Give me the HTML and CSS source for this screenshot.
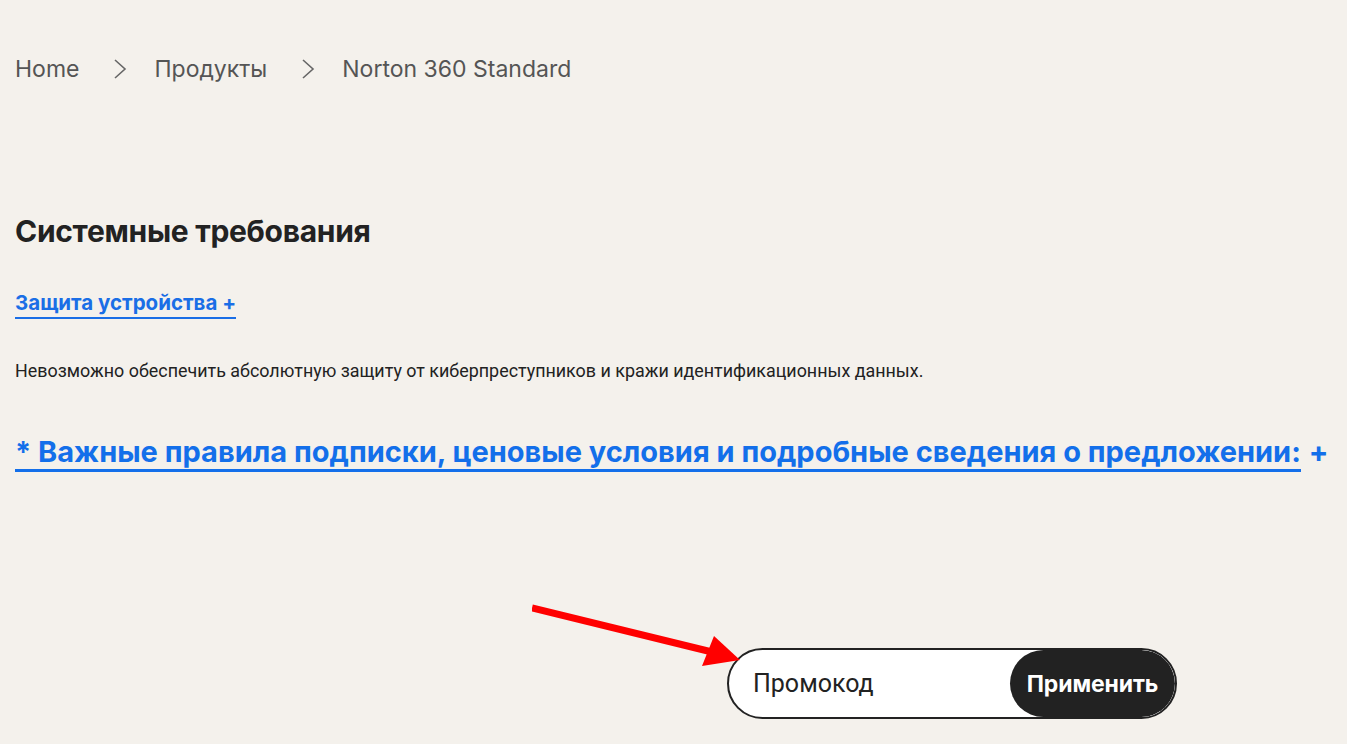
FILE: index.html
```html
<!DOCTYPE html>
<html lang="ru">
<head>
<meta charset="utf-8">
<link rel="stylesheet" href="styles.css">
</head>
<body>
<div class="page">
  <nav class="crumbs">
    <a class="crumb" href="#">Home</a>
    <svg class="chev" width="16" height="24" viewBox="0 0 16 24"><path d="M3 3 L13 12 L3 21" fill="none" stroke="#666" stroke-width="1.6"/></svg>
    <a class="crumb" href="#">Продукты</a>
    <svg class="chev" width="16" height="24" viewBox="0 0 16 24"><path d="M3 3 L13 12 L3 21" fill="none" stroke="#666" stroke-width="1.6"/></svg>
    <span class="crumb">Norton 360 Standard</span>
  </nav>

  <h2 class="title">Системные требования</h2>
  <a class="toggle" href="#">Защита устройства +</a>
  <p class="note">Невозможно обеспечить абсолютную защиту от киберпреступников и кражи идентификационных данных.</p>
  <div class="terms"><a class="terms-link" href="#">* Важные правила подписки, ценовые условия и подробные сведения о предложении:</a><span class="plus">+</span></div>

  <div class="promo-row">
    <form class="promo">
      <span class="promo-input">Промокод</span>
      <button class="promo-btn" type="button">Применить</button>
    </form>
  </div>
  <svg class="arrow" width="220" height="70" viewBox="0 0 220 70"><path d="M0 4 L180 48" stroke="#f00" stroke-width="7" fill="none"/><polygon points="208,56 170,62 182,32" fill="#f00"/></svg>
</div>
</body>
</html>
```
FILE: styles.css
```css
html, body { margin: 0; padding: 0; }
body { background: #f4f1ec; font-family: Inter, "Noto Sans", sans-serif; color: #222; }
.page { position: relative; padding: 0 15px; height: 744px; overflow: hidden; }
.crumbs { display: flex; align-items: center; padding-top: 54px; height: 30px; }
.crumb { font-size: 23px; color: #555; text-decoration: none; line-height: 30px; }
.chev { margin: 0 26px 0 33px; }
.title { font-size: 30px; font-weight: 700; margin: 130px 0 0; line-height: 34px; color: #222; letter-spacing: -0.3px; }
.toggle { display: inline-block; margin-top: 42px; font-size: 20.5px; font-weight: 700; color: #1a6ee6; text-decoration: none; border-bottom: 2px solid #1a6ee6; line-height: 26px; padding-bottom: 1px; }
.note { font-family: Roboto, sans-serif; font-size: 17.9px; margin: 41px 0 0; line-height: 22px; color: #222; }
.terms { margin-top: 53px; display: flex; align-items: flex-start; }
.terms-link { font-size: 29px; font-weight: 700; color: #136fea; text-decoration: none; border-bottom: 3px solid #136fea; line-height: 34px; }
.plus { font-size: 29px; font-weight: 700; color: #136fea; margin-left: 8px; line-height: 34px; }
.promo-row { display: flex; justify-content: flex-start; padding-left: 712px; margin-top: 176px; }
.promo { display: flex; width: 450px; height: 71px; box-sizing: border-box; border: 2.5px solid #222; border-radius: 36px; background: #fff; overflow: hidden; }
.promo-input { flex: 1; font-family: Roboto, sans-serif; font-size: 25px; color: #222; display: flex; align-items: center; padding-left: 24px; }
.promo-btn { width: 165px; border: 0; background: #222; color: #fff; font-family: Inter, sans-serif; font-size: 23px; font-weight: 700; border-radius: 36px; cursor: pointer; letter-spacing: -0.1px; }
.arrow { position: absolute; left: 532px; top: 604px; }
```
